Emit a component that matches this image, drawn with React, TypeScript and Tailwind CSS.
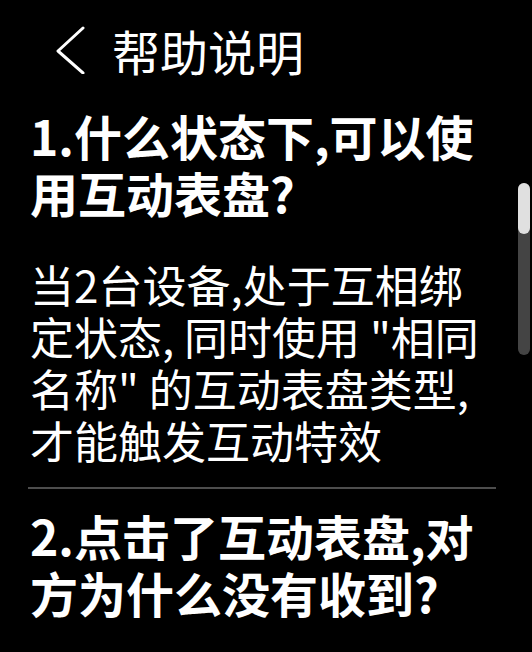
import React from "react";

export default function App() {
  return (
    <div className="relative w-[532px] h-[652px] bg-black overflow-hidden text-white font-['Noto_Sans_CJK_SC','Noto_Sans',sans-serif]">
      <div className="flex items-center h-[60px] mt-[20px] pl-[55px]">
        <svg width="30" height="48" viewBox="0 0 30 48" fill="none" className="shrink-0">
          <polyline points="28,2 3,25 28,47" stroke="white" strokeWidth="3" strokeLinecap="round" strokeLinejoin="round" />
        </svg>
        <span className="ml-[27px] text-[48px] leading-[60px]">帮助说明</span>
      </div>
      <div className="pl-[30px] pr-[32px]">
        <h2 className="mt-[27px] text-[48px] font-semibold leading-[57px]">1.什么状态下,可以使用互动表盘?</h2>
        <p className="mt-[37px] text-[44px] leading-[52px]">
          当2台设备,处于互相绑定状态, 同时使用 "相同名称" 的互动表盘类型,才能触发互动特效
        </p>
        <div className="mt-[21px] -ml-[2px] w-[468px] h-[2px] bg-[#4d4d4d]" />
        <h2 className="mt-[18px] text-[48px] font-semibold leading-[57px]">2.点击了互动表盘,对方为什么没有收到?</h2>
      </div>
      <div className="absolute right-[2px] top-[183px] w-[12px] h-[172px] rounded-full bg-[#444444]">
        <div className="w-[12px] h-[51px] rounded-full bg-[#e0e0e0]" />
      </div>
    </div>
  );
}
